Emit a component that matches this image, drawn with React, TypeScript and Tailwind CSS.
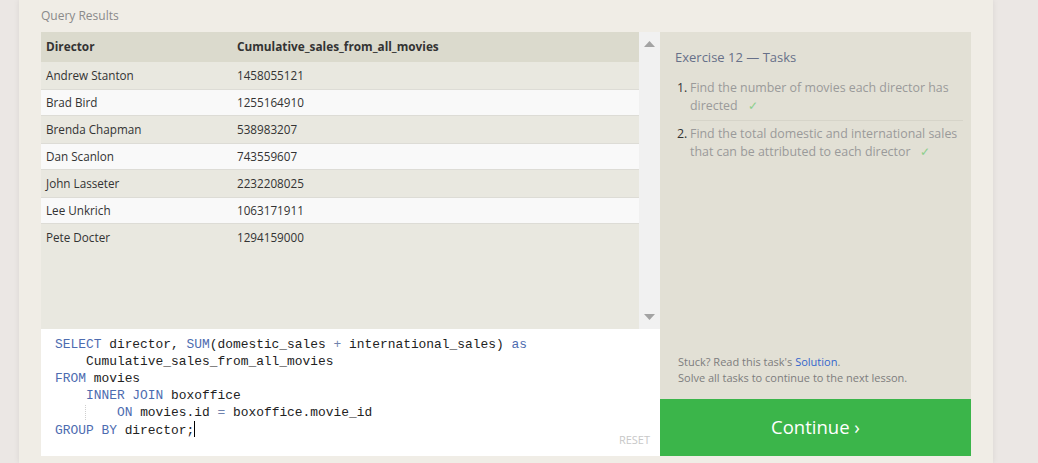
import React from "react";

const rows: [string, string][] = [
  ["Andrew Stanton", "1458055121"],
  ["Brad Bird", "1255164910"],
  ["Brenda Chapman", "538983207"],
  ["Dan Scanlon", "743559607"],
  ["John Lasseter", "2232208025"],
  ["Lee Unkrich", "1063171911"],
  ["Pete Docter", "1294159000"],
];

const K = ({ children }: { children: React.ReactNode }) => (
  <span className="text-[#4d6cb0]">{children}</span>
);
const O = ({ children }: { children: React.ReactNode }) => (
  <span className="text-[#6f82ad]">{children}</span>
);

const Check = () => (
  <span className="inline-block ml-[10px] h-[18px] leading-[18px] align-top text-[#8ccf8c]">✓</span>
);

export default function App() {
  return (
    <div
      className="w-[1038px] h-[463px] bg-[#ebe7e4] overflow-hidden"
      style={{ fontFamily: '"Open Sans", "Noto Sans", sans-serif' }}
    >
      <div className="ml-[19px] w-[974px] h-full bg-[#f0ede6] px-[22px] pt-[7px] shadow-[0_0_6px_rgba(0,0,0,0.08)]">
        <div className="text-[12px] leading-[18px] text-[#8a8a8a]">Query Results</div>
        <div className="mt-[7px] flex">
          {/* left column */}
          <div className="w-[619px] flex flex-col">
            <div className="h-[297px] flex bg-[#e9e8e0]">
              <div className="flex-1">
                <div className="h-[30px] bg-[#dbdacd] flex items-center text-[11.8px] font-bold text-[#333]">
                  <div className="w-[196px] pl-[5px]">Director</div>
                  <div>Cumulative_sales_from_all_movies</div>
                </div>
                {rows.map((r, i) => (
                  <div
                    key={r[0]}
                    className={
                      i % 2 === 1
                        ? "h-[27px] flex items-center text-[11.7px] text-[#333] bg-[#f9f9f9] border-y border-[#dddcd6]"
                        : "h-[27px] flex items-center text-[11.7px] text-[#333]"
                    }
                  >
                    <div className="w-[196px] pl-[5px]">{r[0]}</div>
                    <div>{r[1]}</div>
                  </div>
                ))}
              </div>
              <div className="w-[21px] bg-[#f1f1f1] flex flex-col items-center justify-between py-[9px]">
                <svg width="11" height="6" viewBox="0 0 11 6">
                  <path d="M5.5 0 L11 6 L0 6 Z" fill="#a3a3a3" />
                </svg>
                <svg width="11" height="6" viewBox="0 0 11 6">
                  <path d="M0 0 L11 0 L5.5 6 Z" fill="#a3a3a3" />
                </svg>
              </div>
            </div>
            <div
              className="relative h-[127px] bg-white pl-[14px] pt-[7px] text-[12.9px] leading-[17px] text-[#222] whitespace-pre"
              style={{ fontFamily: '"Liberation Mono", "DejaVu Sans Mono", monospace' }}
            >
              <div>
                <K>SELECT</K> director, <K>SUM</K>(domestic_sales <O>+</O> international_sales) <K>as</K>
              </div>
              <div>{"    "}Cumulative_sales_from_all_movies</div>
              <div>
                <K>FROM</K> movies
              </div>
              <div>
                {"    "}
                <K>INNER JOIN</K> boxoffice
              </div>
              <div>
                {"    "}
                <span className="border-l border-dotted border-[#cfcfcf] -ml-px">{"    "}</span>
                <K>ON</K> movies.id <O>=</O> boxoffice.movie_id
              </div>
              <div>
                <K>GROUP BY</K> director;<span className="inline-block w-px h-[16px] bg-black align-[-3px]"></span>
              </div>
              <div
                className="absolute right-[10px] bottom-[8px] text-[11px] text-[#c8c8c8]"
                style={{ fontFamily: '"Open Sans", sans-serif' }}
              >
                RESET
              </div>
            </div>
          </div>
          {/* right column */}
          <div className="w-[311px] flex flex-col">
            <div className="h-[367px] bg-[#e2e0d5] pl-[15px] pr-[8px] pt-[15px] flex flex-col">
              <div className="text-[13px] leading-[20px] text-[#677089]">Exercise 12 — Tasks</div>
              <div className="mt-[12px] text-[12.4px] leading-[18px] text-[#9a9a9a]">
                <div className="flex pb-[5px] border-b border-[#d6d4c9] ml-[15px]">
                  <span className="shrink-0 -ml-[13px] w-[13px] text-[#333]">1.</span>
                  <span>
                    Find the number of movies each director has directed
                    <Check />
                  </span>
                </div>
                <div className="flex pt-[4px] ml-[15px]">
                  <span className="shrink-0 -ml-[13px] w-[13px] text-[#333]">2.</span>
                  <span>
                    Find the total domestic and international sales that can be attributed to each director
                    <Check />
                  </span>
                </div>
              </div>
              <div className="mt-auto pb-[13px] text-[11px] leading-[16px] text-[#7d7d7d] pl-[3px]">
                <div>
                  Stuck? Read this task's <span className="text-[#3366cc]">Solution</span>.
                </div>
                <div>Solve all tasks to continue to the next lesson.</div>
              </div>
            </div>
            <div className="h-[57px] bg-[#3bb54a] flex items-center justify-center text-white text-[18.5px] pb-px">
              Continue ›
            </div>
          </div>
        </div>
      </div>
    </div>
  );
}
